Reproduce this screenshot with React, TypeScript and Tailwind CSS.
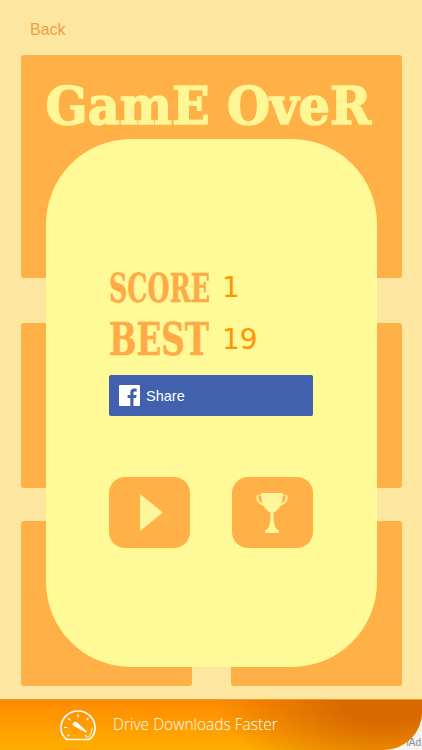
import React from 'react';

const display = { fontFamily: '"DejaVu Serif", serif' };
const hand = { fontFamily: '"DejaVu Sans", sans-serif' };

function Trophy() {
  return (
    <svg viewBox="0 0 32 40" className="w-[32px] h-[40px] -ml-[1px]" fill="#fff59b">
      <path d="M5 0h22v2.200c1.700-.5 3.300-.4 4 .4.900 1 .9 3 0 4.900-1 2.200-3 4-6.300 5.300-1.800 3.200-4.300 5.300-7.200 6.700-.3 5 .3 10.500 1.800 14.500.6 1.500 1.500 2.500 3.700 3.300V40H9v-2.700c2.200-.8 3.100-1.800 3.700-3.300 1.500-4 2.100-9.500 1.800-14.500-2.900-1.400-5.400-3.500-7.200-6.700C4 11.500 2 9.700 1 7.500.1 5.600.1 3.600 1 2.600c.7-.8 2.300-.9 4-.4zm.1 2.900c-1.300-.3-2.200-.2-2.600.2-.5.6-.4 2 .2 3.300.7 1.600 2.100 2.900 4 4-.9-2.300-1.400-4.800-1.600-7.500zm21.800 0c-.2 2.700-.7 5.200-1.600 7.500 1.900-1.100 3.300-2.400 4-4 .6-1.300.7-2.700.2-3.300-.4-.4-1.300-.5-2.600-.2z" fillRule="evenodd" />
    </svg>
  );
}

function Gauge() {
  return (
    <svg viewBox="0 0 36 31" className="w-[36px] h-[31px]" fill="none" stroke="#fff" strokeLinecap="round">
      <path d="M7 29.500C3.300 27 1 23 1 18 1 8.500 8.500 1 18 1s17 7.500 17 17c0 5-2.300 9-6 11.500z" strokeWidth="1.700" />
      <path d="M32 18c0 4-1.500 7.500-4.500 10" strokeWidth="1" />
      <path d="M18 4.500v2.500M8.500 8.500l1.500 1.500M4.500 17.500h2.500M7.500 26l1.500-1M28 8.500l-1 1M26.500 26.500l-1-1" strokeWidth="1.200" />
      <path d="M13.500 12.500c1.500-1.200 3-.8 4.200.4l9.300 8.600-.8 1-11.500-6c-2-1-2.800-2.800-1.200-4z" fill="#fff" stroke="none" />
    </svg>
  );
}

export default function App() {
  return (
    <div className="relative w-[422px] h-[750px] overflow-hidden bg-[#fde6a0] flex flex-col" style={{ fontFamily: '"Liberation Sans", Arial, sans-serif' }}>
      <div className="h-[55px] pl-[30px] pt-[20px] text-[16px] leading-[20px] text-[#ee9f45]">Back</div>

      {/* board tiles behind the popup */}
      <div className="ml-[21px] w-[381px] h-[631px] flex flex-col">
        <div className="h-[223px] rounded-[3px] bg-[#ffb046] flex justify-center pt-[21px] pr-[6px]">
          <span style={display} className="text-[52px] leading-[60px] font-bold text-[#fff795] whitespace-nowrap scale-x-[0.95] [-webkit-text-stroke:1.5px_#fff795]">GamE OveR</span>
        </div>
        <div className="mt-[45px] h-[165px] flex justify-between">
          <div className="w-[171px] rounded-[3px] bg-[#ffb046]" />
          <div className="w-[171px] rounded-[3px] bg-[#ffb046]" />
        </div>
        <div className="mt-[33px] h-[165px] flex justify-between">
          <div className="w-[171px] rounded-[3px] bg-[#ffb046]" />
          <div className="w-[171px] rounded-[3px] bg-[#ffb046]" />
        </div>
      </div>

      {/* popup */}
      <div className="absolute left-[46px] top-[139px] w-[331px] h-[528px] rounded-[85px] bg-[#fff997] pl-[63px] pt-[129px]">
        <div className="flex items-center h-[40px]">
          <div className="w-[113px]">
            <span style={display} className="block origin-left scale-x-[0.635] text-[40px] leading-[40px] font-bold text-[#ffa947] whitespace-nowrap [-webkit-text-stroke:0.5px_#ffa947]">SCORE</span>
          </div>
          <span style={hand} className="text-[28px] leading-[40px] text-[#ff9500]">1</span>
        </div>
        <div className="flex items-center h-[40px] mt-[12px]">
          <div className="w-[113px]">
            <span style={display} className="block origin-left scale-x-[0.74] text-[44px] leading-[40px] font-bold text-[#ffa947] whitespace-nowrap [-webkit-text-stroke:0.5px_#ffa947]">BEST</span>
          </div>
          <span style={hand} className="text-[28px] leading-[40px] text-[#ff9500]">19</span>
        </div>
        <div className="mt-[15px] w-[204px] h-[41px] rounded-[2px] bg-[#4160ae] flex items-center pl-[10px] gap-[6px]">
          <div className="w-[21px] h-[21px] bg-white overflow-hidden rounded-[1px]">
            <svg viewBox="0 0 21 21" className="w-[21px] h-[21px]" fill="#4160ae">
              <path d="M14.500 21v-8h2.700l.4-3.100h-3.100V8c0-.9.3-1.500 1.600-1.500h1.600V3.700c-.3 0-1.300-.1-2.400-.1-2.400 0-4 1.400-4 4.100v2.200H8.600V13h2.700v8z" />
            </svg>
          </div>
          <span className="text-[14.500px] text-white pt-[2px]">Share</span>
        </div>
        <div className="mt-[61px] w-[204px] flex justify-between">
          <div className="w-[81px] h-[71px] rounded-[16px] bg-[#ffb046] flex items-center justify-center">
            <svg viewBox="0 0 23 37" className="w-[23px] h-[37px] ml-[4px]" fill="#fff59b"><path d="M0 0l23 18.500L0 37z" /></svg>
          </div>
          <div className="w-[81px] h-[71px] rounded-[16px] bg-[#ffb046] flex items-center justify-center">
            <Trophy />
          </div>
        </div>
      </div>

      {/* ad banner */}
      <div className="absolute left-0 bottom-0 w-[422px] h-[51px] bg-[#f4f4f4]">
        <div className="relative h-[51px] rounded-br-[38px] border-t border-[#f09a30] bg-[radial-gradient(ellipse_170px_85px_at_385px_0px,#d76900_25%,transparent_100%),linear-gradient(to_bottom,#ff8a00,#ffae00)] flex items-center pl-[60px] gap-[17px]">
          <Gauge />
          <span className="text-[15.500px] text-white" style={{ fontFamily: '"Open Sans", sans-serif', fontWeight: 300 }}>Drive Downloads Faster</span>
        </div>
        <span className="absolute right-[1px] bottom-[1px] text-[10px] leading-[12px] text-[#8a8a8a]">iAd</span>
      </div>
    </div>
  );
}
